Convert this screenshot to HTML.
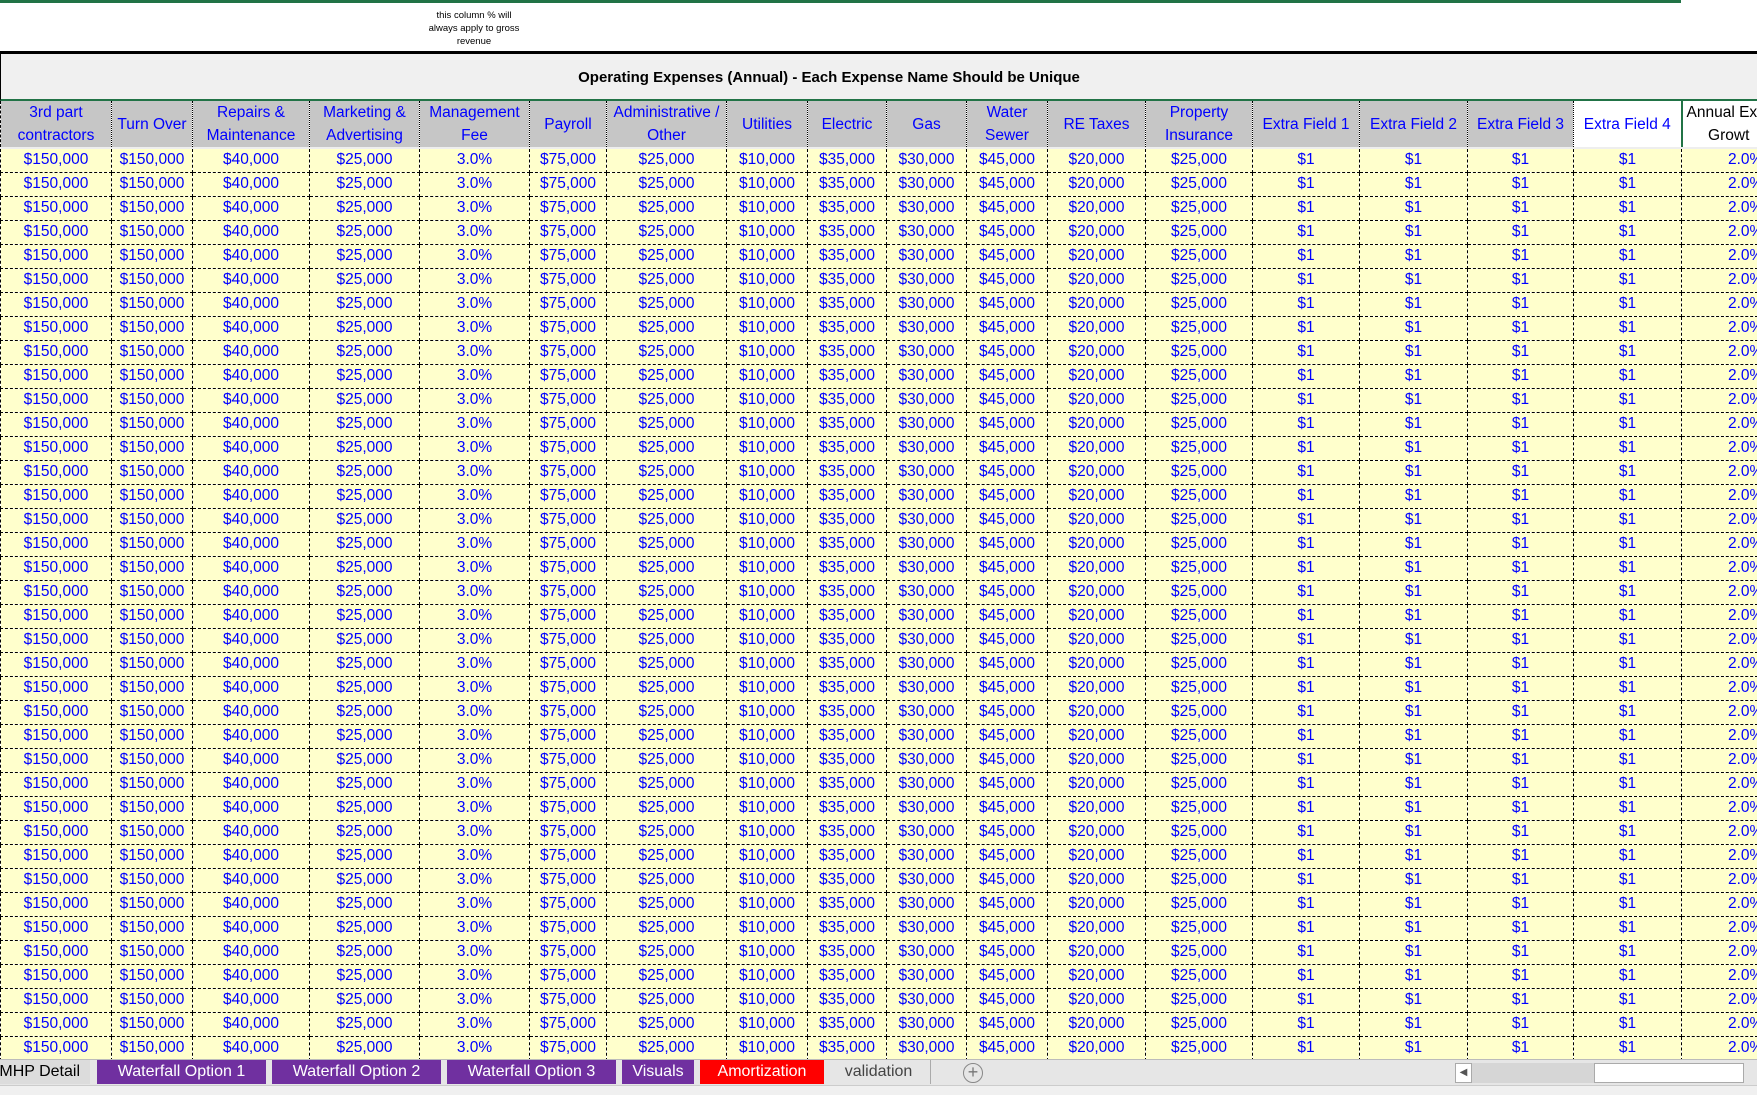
<!DOCTYPE html>
<html><head><meta charset="utf-8"><style>
*{margin:0;padding:0;box-sizing:border-box}
body{width:1757px;height:1095px;overflow:hidden;background:#fff;font-family:"Liberation Sans",sans-serif;position:relative}
.topline{position:absolute;left:0;top:0;width:1681px;height:3px;border-bottom:3px solid #217346}
.note{position:absolute;left:424px;top:9px;width:100px;text-align:center;font-size:9.5px;line-height:13px;color:#000}
.title{position:absolute;left:0;top:51px;width:1757px;height:50px;background:#f0f0f0;border-top:3px solid #000;border-left:1px solid #000;border-bottom:2px solid #217346;font-weight:bold;font-size:15px;text-align:center;line-height:47px;padding-right:100px}
table{position:absolute;left:0;top:101px;border-collapse:collapse;table-layout:fixed;width:1757px}
td{height:24px;font-size:15.5px;color:#0000ff;text-align:center;background:#ffffcc;border-right:1px dashed #000;border-bottom:1px dashed #000;white-space:nowrap;overflow:hidden;line-height:22px}
tr.h td{height:46px;background:#c6c6c6;line-height:23px;white-space:normal;border-right:1px dotted #000;border-bottom:2px solid #eee;font-size:15.5px}
tr.h td.w{background:#fff;border-right:2px solid #217346}
tr.h td.k{background:#fff;color:#000;text-align:left;padding-left:4px;white-space:nowrap}
td.r{text-align:left;padding-left:46px}
td:first-child{border-left:1px dashed #000}
.tabs{position:absolute;left:0;top:1059px;width:1757px;height:27px;background:#e6e6e6;border-top:1px solid #bbb;z-index:2}
.tab{position:absolute;top:0;height:24px;font-size:16px;line-height:23px;text-align:center;color:#fff;white-space:nowrap;overflow:hidden}
.p{background:#7030a0}
.status{position:absolute;left:0;top:1085px;width:1757px;height:10px;background:#f0f0f0;border-top:1px solid #ccc;z-index:2}
</style></head><body>
<div class="topline"></div>
<div class="note">this column % will always apply to gross revenue</div>
<div class="title">Operating Expenses (Annual) - Each Expense Name Should be Unique</div>
<table>
<colgroup><col style="width:111px"><col style="width:81px"><col style="width:117px"><col style="width:110px"><col style="width:110px"><col style="width:77px"><col style="width:120px"><col style="width:81px"><col style="width:79px"><col style="width:80px"><col style="width:81px"><col style="width:98px"><col style="width:107px"><col style="width:107px"><col style="width:108px"><col style="width:106px"><col style="width:108px"><col style="width:76px"></colgroup>
<tr class="h"><td>3rd part contractors</td><td>Turn Over</td><td>Repairs &amp; Maintenance</td><td>Marketing &amp; Advertising</td><td>Management Fee</td><td>Payroll</td><td>Administrative / Other</td><td>Utilities</td><td>Electric</td><td>Gas</td><td>Water Sewer</td><td>RE Taxes</td><td>Property Insurance</td><td>Extra Field 1</td><td>Extra Field 2</td><td>Extra Field 3</td><td class="w">Extra Field 4</td><td class="k">Annual Ex<br>&nbsp;&nbsp;&nbsp;&nbsp;&nbsp;Growt</td></tr>
<tr><td>$150,000</td><td>$150,000</td><td>$40,000</td><td>$25,000</td><td>3.0%</td><td>$75,000</td><td>$25,000</td><td>$10,000</td><td>$35,000</td><td>$30,000</td><td>$45,000</td><td>$20,000</td><td>$25,000</td><td>$1</td><td>$1</td><td>$1</td><td>$1</td><td class="r">2.0%</td></tr>
<tr><td>$150,000</td><td>$150,000</td><td>$40,000</td><td>$25,000</td><td>3.0%</td><td>$75,000</td><td>$25,000</td><td>$10,000</td><td>$35,000</td><td>$30,000</td><td>$45,000</td><td>$20,000</td><td>$25,000</td><td>$1</td><td>$1</td><td>$1</td><td>$1</td><td class="r">2.0%</td></tr>
<tr><td>$150,000</td><td>$150,000</td><td>$40,000</td><td>$25,000</td><td>3.0%</td><td>$75,000</td><td>$25,000</td><td>$10,000</td><td>$35,000</td><td>$30,000</td><td>$45,000</td><td>$20,000</td><td>$25,000</td><td>$1</td><td>$1</td><td>$1</td><td>$1</td><td class="r">2.0%</td></tr>
<tr><td>$150,000</td><td>$150,000</td><td>$40,000</td><td>$25,000</td><td>3.0%</td><td>$75,000</td><td>$25,000</td><td>$10,000</td><td>$35,000</td><td>$30,000</td><td>$45,000</td><td>$20,000</td><td>$25,000</td><td>$1</td><td>$1</td><td>$1</td><td>$1</td><td class="r">2.0%</td></tr>
<tr><td>$150,000</td><td>$150,000</td><td>$40,000</td><td>$25,000</td><td>3.0%</td><td>$75,000</td><td>$25,000</td><td>$10,000</td><td>$35,000</td><td>$30,000</td><td>$45,000</td><td>$20,000</td><td>$25,000</td><td>$1</td><td>$1</td><td>$1</td><td>$1</td><td class="r">2.0%</td></tr>
<tr><td>$150,000</td><td>$150,000</td><td>$40,000</td><td>$25,000</td><td>3.0%</td><td>$75,000</td><td>$25,000</td><td>$10,000</td><td>$35,000</td><td>$30,000</td><td>$45,000</td><td>$20,000</td><td>$25,000</td><td>$1</td><td>$1</td><td>$1</td><td>$1</td><td class="r">2.0%</td></tr>
<tr><td>$150,000</td><td>$150,000</td><td>$40,000</td><td>$25,000</td><td>3.0%</td><td>$75,000</td><td>$25,000</td><td>$10,000</td><td>$35,000</td><td>$30,000</td><td>$45,000</td><td>$20,000</td><td>$25,000</td><td>$1</td><td>$1</td><td>$1</td><td>$1</td><td class="r">2.0%</td></tr>
<tr><td>$150,000</td><td>$150,000</td><td>$40,000</td><td>$25,000</td><td>3.0%</td><td>$75,000</td><td>$25,000</td><td>$10,000</td><td>$35,000</td><td>$30,000</td><td>$45,000</td><td>$20,000</td><td>$25,000</td><td>$1</td><td>$1</td><td>$1</td><td>$1</td><td class="r">2.0%</td></tr>
<tr><td>$150,000</td><td>$150,000</td><td>$40,000</td><td>$25,000</td><td>3.0%</td><td>$75,000</td><td>$25,000</td><td>$10,000</td><td>$35,000</td><td>$30,000</td><td>$45,000</td><td>$20,000</td><td>$25,000</td><td>$1</td><td>$1</td><td>$1</td><td>$1</td><td class="r">2.0%</td></tr>
<tr><td>$150,000</td><td>$150,000</td><td>$40,000</td><td>$25,000</td><td>3.0%</td><td>$75,000</td><td>$25,000</td><td>$10,000</td><td>$35,000</td><td>$30,000</td><td>$45,000</td><td>$20,000</td><td>$25,000</td><td>$1</td><td>$1</td><td>$1</td><td>$1</td><td class="r">2.0%</td></tr>
<tr><td>$150,000</td><td>$150,000</td><td>$40,000</td><td>$25,000</td><td>3.0%</td><td>$75,000</td><td>$25,000</td><td>$10,000</td><td>$35,000</td><td>$30,000</td><td>$45,000</td><td>$20,000</td><td>$25,000</td><td>$1</td><td>$1</td><td>$1</td><td>$1</td><td class="r">2.0%</td></tr>
<tr><td>$150,000</td><td>$150,000</td><td>$40,000</td><td>$25,000</td><td>3.0%</td><td>$75,000</td><td>$25,000</td><td>$10,000</td><td>$35,000</td><td>$30,000</td><td>$45,000</td><td>$20,000</td><td>$25,000</td><td>$1</td><td>$1</td><td>$1</td><td>$1</td><td class="r">2.0%</td></tr>
<tr><td>$150,000</td><td>$150,000</td><td>$40,000</td><td>$25,000</td><td>3.0%</td><td>$75,000</td><td>$25,000</td><td>$10,000</td><td>$35,000</td><td>$30,000</td><td>$45,000</td><td>$20,000</td><td>$25,000</td><td>$1</td><td>$1</td><td>$1</td><td>$1</td><td class="r">2.0%</td></tr>
<tr><td>$150,000</td><td>$150,000</td><td>$40,000</td><td>$25,000</td><td>3.0%</td><td>$75,000</td><td>$25,000</td><td>$10,000</td><td>$35,000</td><td>$30,000</td><td>$45,000</td><td>$20,000</td><td>$25,000</td><td>$1</td><td>$1</td><td>$1</td><td>$1</td><td class="r">2.0%</td></tr>
<tr><td>$150,000</td><td>$150,000</td><td>$40,000</td><td>$25,000</td><td>3.0%</td><td>$75,000</td><td>$25,000</td><td>$10,000</td><td>$35,000</td><td>$30,000</td><td>$45,000</td><td>$20,000</td><td>$25,000</td><td>$1</td><td>$1</td><td>$1</td><td>$1</td><td class="r">2.0%</td></tr>
<tr><td>$150,000</td><td>$150,000</td><td>$40,000</td><td>$25,000</td><td>3.0%</td><td>$75,000</td><td>$25,000</td><td>$10,000</td><td>$35,000</td><td>$30,000</td><td>$45,000</td><td>$20,000</td><td>$25,000</td><td>$1</td><td>$1</td><td>$1</td><td>$1</td><td class="r">2.0%</td></tr>
<tr><td>$150,000</td><td>$150,000</td><td>$40,000</td><td>$25,000</td><td>3.0%</td><td>$75,000</td><td>$25,000</td><td>$10,000</td><td>$35,000</td><td>$30,000</td><td>$45,000</td><td>$20,000</td><td>$25,000</td><td>$1</td><td>$1</td><td>$1</td><td>$1</td><td class="r">2.0%</td></tr>
<tr><td>$150,000</td><td>$150,000</td><td>$40,000</td><td>$25,000</td><td>3.0%</td><td>$75,000</td><td>$25,000</td><td>$10,000</td><td>$35,000</td><td>$30,000</td><td>$45,000</td><td>$20,000</td><td>$25,000</td><td>$1</td><td>$1</td><td>$1</td><td>$1</td><td class="r">2.0%</td></tr>
<tr><td>$150,000</td><td>$150,000</td><td>$40,000</td><td>$25,000</td><td>3.0%</td><td>$75,000</td><td>$25,000</td><td>$10,000</td><td>$35,000</td><td>$30,000</td><td>$45,000</td><td>$20,000</td><td>$25,000</td><td>$1</td><td>$1</td><td>$1</td><td>$1</td><td class="r">2.0%</td></tr>
<tr><td>$150,000</td><td>$150,000</td><td>$40,000</td><td>$25,000</td><td>3.0%</td><td>$75,000</td><td>$25,000</td><td>$10,000</td><td>$35,000</td><td>$30,000</td><td>$45,000</td><td>$20,000</td><td>$25,000</td><td>$1</td><td>$1</td><td>$1</td><td>$1</td><td class="r">2.0%</td></tr>
<tr><td>$150,000</td><td>$150,000</td><td>$40,000</td><td>$25,000</td><td>3.0%</td><td>$75,000</td><td>$25,000</td><td>$10,000</td><td>$35,000</td><td>$30,000</td><td>$45,000</td><td>$20,000</td><td>$25,000</td><td>$1</td><td>$1</td><td>$1</td><td>$1</td><td class="r">2.0%</td></tr>
<tr><td>$150,000</td><td>$150,000</td><td>$40,000</td><td>$25,000</td><td>3.0%</td><td>$75,000</td><td>$25,000</td><td>$10,000</td><td>$35,000</td><td>$30,000</td><td>$45,000</td><td>$20,000</td><td>$25,000</td><td>$1</td><td>$1</td><td>$1</td><td>$1</td><td class="r">2.0%</td></tr>
<tr><td>$150,000</td><td>$150,000</td><td>$40,000</td><td>$25,000</td><td>3.0%</td><td>$75,000</td><td>$25,000</td><td>$10,000</td><td>$35,000</td><td>$30,000</td><td>$45,000</td><td>$20,000</td><td>$25,000</td><td>$1</td><td>$1</td><td>$1</td><td>$1</td><td class="r">2.0%</td></tr>
<tr><td>$150,000</td><td>$150,000</td><td>$40,000</td><td>$25,000</td><td>3.0%</td><td>$75,000</td><td>$25,000</td><td>$10,000</td><td>$35,000</td><td>$30,000</td><td>$45,000</td><td>$20,000</td><td>$25,000</td><td>$1</td><td>$1</td><td>$1</td><td>$1</td><td class="r">2.0%</td></tr>
<tr><td>$150,000</td><td>$150,000</td><td>$40,000</td><td>$25,000</td><td>3.0%</td><td>$75,000</td><td>$25,000</td><td>$10,000</td><td>$35,000</td><td>$30,000</td><td>$45,000</td><td>$20,000</td><td>$25,000</td><td>$1</td><td>$1</td><td>$1</td><td>$1</td><td class="r">2.0%</td></tr>
<tr><td>$150,000</td><td>$150,000</td><td>$40,000</td><td>$25,000</td><td>3.0%</td><td>$75,000</td><td>$25,000</td><td>$10,000</td><td>$35,000</td><td>$30,000</td><td>$45,000</td><td>$20,000</td><td>$25,000</td><td>$1</td><td>$1</td><td>$1</td><td>$1</td><td class="r">2.0%</td></tr>
<tr><td>$150,000</td><td>$150,000</td><td>$40,000</td><td>$25,000</td><td>3.0%</td><td>$75,000</td><td>$25,000</td><td>$10,000</td><td>$35,000</td><td>$30,000</td><td>$45,000</td><td>$20,000</td><td>$25,000</td><td>$1</td><td>$1</td><td>$1</td><td>$1</td><td class="r">2.0%</td></tr>
<tr><td>$150,000</td><td>$150,000</td><td>$40,000</td><td>$25,000</td><td>3.0%</td><td>$75,000</td><td>$25,000</td><td>$10,000</td><td>$35,000</td><td>$30,000</td><td>$45,000</td><td>$20,000</td><td>$25,000</td><td>$1</td><td>$1</td><td>$1</td><td>$1</td><td class="r">2.0%</td></tr>
<tr><td>$150,000</td><td>$150,000</td><td>$40,000</td><td>$25,000</td><td>3.0%</td><td>$75,000</td><td>$25,000</td><td>$10,000</td><td>$35,000</td><td>$30,000</td><td>$45,000</td><td>$20,000</td><td>$25,000</td><td>$1</td><td>$1</td><td>$1</td><td>$1</td><td class="r">2.0%</td></tr>
<tr><td>$150,000</td><td>$150,000</td><td>$40,000</td><td>$25,000</td><td>3.0%</td><td>$75,000</td><td>$25,000</td><td>$10,000</td><td>$35,000</td><td>$30,000</td><td>$45,000</td><td>$20,000</td><td>$25,000</td><td>$1</td><td>$1</td><td>$1</td><td>$1</td><td class="r">2.0%</td></tr>
<tr><td>$150,000</td><td>$150,000</td><td>$40,000</td><td>$25,000</td><td>3.0%</td><td>$75,000</td><td>$25,000</td><td>$10,000</td><td>$35,000</td><td>$30,000</td><td>$45,000</td><td>$20,000</td><td>$25,000</td><td>$1</td><td>$1</td><td>$1</td><td>$1</td><td class="r">2.0%</td></tr>
<tr><td>$150,000</td><td>$150,000</td><td>$40,000</td><td>$25,000</td><td>3.0%</td><td>$75,000</td><td>$25,000</td><td>$10,000</td><td>$35,000</td><td>$30,000</td><td>$45,000</td><td>$20,000</td><td>$25,000</td><td>$1</td><td>$1</td><td>$1</td><td>$1</td><td class="r">2.0%</td></tr>
<tr><td>$150,000</td><td>$150,000</td><td>$40,000</td><td>$25,000</td><td>3.0%</td><td>$75,000</td><td>$25,000</td><td>$10,000</td><td>$35,000</td><td>$30,000</td><td>$45,000</td><td>$20,000</td><td>$25,000</td><td>$1</td><td>$1</td><td>$1</td><td>$1</td><td class="r">2.0%</td></tr>
<tr><td>$150,000</td><td>$150,000</td><td>$40,000</td><td>$25,000</td><td>3.0%</td><td>$75,000</td><td>$25,000</td><td>$10,000</td><td>$35,000</td><td>$30,000</td><td>$45,000</td><td>$20,000</td><td>$25,000</td><td>$1</td><td>$1</td><td>$1</td><td>$1</td><td class="r">2.0%</td></tr>
<tr><td>$150,000</td><td>$150,000</td><td>$40,000</td><td>$25,000</td><td>3.0%</td><td>$75,000</td><td>$25,000</td><td>$10,000</td><td>$35,000</td><td>$30,000</td><td>$45,000</td><td>$20,000</td><td>$25,000</td><td>$1</td><td>$1</td><td>$1</td><td>$1</td><td class="r">2.0%</td></tr>
<tr><td>$150,000</td><td>$150,000</td><td>$40,000</td><td>$25,000</td><td>3.0%</td><td>$75,000</td><td>$25,000</td><td>$10,000</td><td>$35,000</td><td>$30,000</td><td>$45,000</td><td>$20,000</td><td>$25,000</td><td>$1</td><td>$1</td><td>$1</td><td>$1</td><td class="r">2.0%</td></tr>
<tr><td>$150,000</td><td>$150,000</td><td>$40,000</td><td>$25,000</td><td>3.0%</td><td>$75,000</td><td>$25,000</td><td>$10,000</td><td>$35,000</td><td>$30,000</td><td>$45,000</td><td>$20,000</td><td>$25,000</td><td>$1</td><td>$1</td><td>$1</td><td>$1</td><td class="r">2.0%</td></tr>
<tr><td>$150,000</td><td>$150,000</td><td>$40,000</td><td>$25,000</td><td>3.0%</td><td>$75,000</td><td>$25,000</td><td>$10,000</td><td>$35,000</td><td>$30,000</td><td>$45,000</td><td>$20,000</td><td>$25,000</td><td>$1</td><td>$1</td><td>$1</td><td>$1</td><td class="r">2.0%</td></tr>
<tr><td>$150,000</td><td>$150,000</td><td>$40,000</td><td>$25,000</td><td>3.0%</td><td>$75,000</td><td>$25,000</td><td>$10,000</td><td>$35,000</td><td>$30,000</td><td>$45,000</td><td>$20,000</td><td>$25,000</td><td>$1</td><td>$1</td><td>$1</td><td>$1</td><td class="r">2.0%</td></tr>
</table>
<div class="tabs">
<div class="tab" style="left:0;width:90px;background:#dcdcdc;color:#000;text-align:right;padding-right:10px;direction:rtl">MHP Detail</div>
<div class="tab p" style="left:97px;width:169px">Waterfall Option 1</div>
<div class="tab p" style="left:272px;width:169px">Waterfall Option 2</div>
<div class="tab p" style="left:447px;width:169px">Waterfall Option 3</div>
<div class="tab p" style="left:622px;width:72px">Visuals</div>
<div class="tab" style="left:700px;width:124px;background:#ff0000">Amortization</div>
<div class="tab" style="left:827px;width:104px;color:#444;border-right:1px solid #aaa">validation</div>
<div class="tab" style="left:963px;top:3px;width:20px;height:20px;border:1px solid #888;border-radius:50%;color:#777;line-height:17px;font-size:18px">+</div>
<div class="tab" style="left:1455px;top:3px;width:17px;height:20px;background:#fff;border:1px solid #aaa;color:#555;font-size:10px;line-height:18px">◀</div>
<div class="tab" style="left:1472px;top:3px;width:122px;height:20px;background:#d6d6d6"></div>
<div class="tab" style="left:1594px;top:3px;width:150px;height:20px;background:#fff;border:1px solid #aaa"></div>
</div>
<div class="status"></div>
</body></html>
